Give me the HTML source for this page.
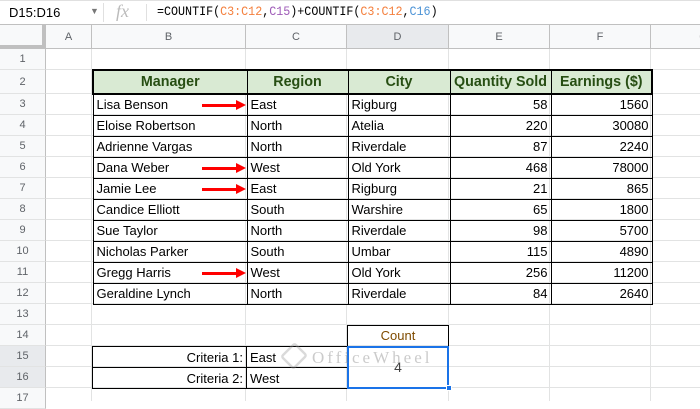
<!DOCTYPE html>
<html><head><style>
body{margin:0;width:700px;height:401px;overflow:hidden;background:#fff;font-family:"Liberation Sans",Arial,sans-serif;position:relative}
.a{position:absolute;box-sizing:border-box}
.rh{position:absolute;left:0;width:46px;background:#f8f9fa;border-right:1px solid #c0c0c0;border-bottom:1px solid #e2e3e3;color:#5f6368;font-size:11px;text-align:center;box-sizing:border-box}
.ch{position:absolute;top:25px;height:24px;background:#f8f9fa;border-right:1px solid #c0c0c0;border-bottom:1px solid #c0c0c0;color:#5f6368;font-size:11px;text-align:center;line-height:24px;box-sizing:border-box}
.vl{position:absolute;top:49px;bottom:0;width:1px;background:#e2e3e3}
.hl{position:absolute;left:46px;right:0;height:1px;background:#e2e3e3}
table{border-collapse:collapse;position:absolute;font-size:13px;table-layout:fixed}
td{border:1px solid #000;padding:0 3px;height:21px;line-height:19px;box-sizing:border-box;white-space:nowrap;overflow:hidden}
tr{height:21px}
th{border:2px solid #000;border-width:2px 1px 2px 1px;background:#d9ead3;color:#274e13;font-size:14.3px;height:22px;line-height:20px;padding:0;white-space:nowrap}
.r{text-align:right}
.arr{position:absolute;height:3px;background:#f00;width:34px}
.arr:after{content:"";position:absolute;right:-10px;top:-4px;border-left:10px solid #f00;border-top:5.5px solid transparent;border-bottom:5.5px solid transparent}
</style></head><body>
<div class="a" style="left:0;top:0;width:700px;height:25px;border-bottom:1px solid #c0c0c0;border-top:1px solid #e0e0e0"></div>
<div class="a" style="left:9px;top:5px;font-size:13px;color:#000">D15:D16</div>
<div class="a" style="left:90px;top:6px;font-size:9px;color:#777">▼</div>
<div class="a" style="left:103px;top:3px;width:1px;height:19px;background:#e0e0e0"></div>
<div class="a" style="left:116px;top:1px;font-size:18px;color:#bbb;font-style:italic;font-family:'Liberation Serif',serif">fx</div>
<div class="a" style="left:146px;top:4px;width:1px;height:17px;background:#e0e0e0"></div>
<div class="a" style="left:157px;top:4px;font-size:11.7px;color:#000;font-family:'Liberation Mono',monospace;transform:scaleY(1.12);transform-origin:top left">=COUNTIF(<span style="color:#f4803e">C3:C12</span>,<span style="color:#9f5cb8">C15</span>)+COUNTIF(<span style="color:#f4803e">C3:C12</span>,<span style="color:#4c93d6">C16</span>)</div>
<div class="ch" style="left:0;width:46px;background:#f8f9fa;border-right:4px solid #c0c0c0;border-bottom:4px solid #c0c0c0"></div>
<div class="ch" style="left:46px;width:46px">A</div>
<div class="ch" style="left:92px;width:154px">B</div>
<div class="ch" style="left:246px;width:101px">C</div>
<div class="ch" style="left:347px;width:102px;background:#e8eaed">D</div>
<div class="ch" style="left:449px;width:101px">E</div>
<div class="ch" style="left:550px;width:101px">F</div>
<div class="ch" style="left:651px;width:60px;color:#bbb">&nbsp;&nbsp;&nbsp;&nbsp;&nbsp;&nbsp;&nbsp;&nbsp;&nbsp;&nbsp;&nbsp;&nbsp;&nbsp;&nbsp;&nbsp;G</div>
<div class="vl" style="left:91px"></div><div class="vl" style="left:245px"></div><div class="vl" style="left:346px"></div><div class="vl" style="left:448px"></div><div class="vl" style="left:549px"></div><div class="vl" style="left:650px"></div>
<div class="hl" style="top:69px"></div><div class="hl" style="top:93px"></div><div class="hl" style="top:114px"></div><div class="hl" style="top:135px"></div><div class="hl" style="top:156px"></div><div class="hl" style="top:177px"></div><div class="hl" style="top:198px"></div><div class="hl" style="top:219px"></div><div class="hl" style="top:240px"></div><div class="hl" style="top:261px"></div><div class="hl" style="top:282px"></div><div class="hl" style="top:303px"></div><div class="hl" style="top:324px"></div><div class="hl" style="top:345px"></div><div class="hl" style="top:366px"></div><div class="hl" style="top:387px"></div>
<div class="rh" style="top:49px;height:21px;line-height:21px">1</div>
<div class="rh" style="top:70px;height:24px;line-height:24px">2</div>
<div class="rh" style="top:94px;height:21px;line-height:21px">3</div>
<div class="rh" style="top:115px;height:21px;line-height:21px">4</div>
<div class="rh" style="top:136px;height:21px;line-height:21px">5</div>
<div class="rh" style="top:157px;height:21px;line-height:21px">6</div>
<div class="rh" style="top:178px;height:21px;line-height:21px">7</div>
<div class="rh" style="top:199px;height:21px;line-height:21px">8</div>
<div class="rh" style="top:220px;height:21px;line-height:21px">9</div>
<div class="rh" style="top:241px;height:21px;line-height:21px">10</div>
<div class="rh" style="top:262px;height:21px;line-height:21px">11</div>
<div class="rh" style="top:283px;height:21px;line-height:21px">12</div>
<div class="rh" style="top:304px;height:21px;line-height:21px">13</div>
<div class="rh" style="top:325px;height:21px;line-height:21px">14</div>
<div class="rh" style="top:346px;height:21px;line-height:21px;background:#e8eaed">15</div>
<div class="rh" style="top:367px;height:21px;line-height:21px;background:#e8eaed">16</div>
<div class="rh" style="top:388px;height:21px;line-height:21px">17</div>
<table style="left:92px;top:69px;width:559px">
<colgroup><col style="width:154px"><col style="width:101px"><col style="width:102px"><col style="width:101px"><col style="width:101px"></colgroup>
<tr style="height:24px"><th style="border-left-width:2px">Manager</th><th>Region</th><th>City</th><th>Quantity Sold</th><th style="border-right-width:2px">Earnings ($)</th></tr>
<tr><td>Lisa Benson</td><td>East</td><td>Rigburg</td><td class="r">58</td><td class="r">1560</td></tr>
<tr><td>Eloise Robertson</td><td>North</td><td>Atelia</td><td class="r">220</td><td class="r">30080</td></tr>
<tr><td>Adrienne Vargas</td><td>North</td><td>Riverdale</td><td class="r">87</td><td class="r">2240</td></tr>
<tr><td>Dana Weber</td><td>West</td><td>Old York</td><td class="r">468</td><td class="r">78000</td></tr>
<tr><td>Jamie Lee</td><td>East</td><td>Rigburg</td><td class="r">21</td><td class="r">865</td></tr>
<tr><td>Candice Elliott</td><td>South</td><td>Warshire</td><td class="r">65</td><td class="r">1800</td></tr>
<tr><td>Sue Taylor</td><td>North</td><td>Riverdale</td><td class="r">98</td><td class="r">5700</td></tr>
<tr><td>Nicholas Parker</td><td>South</td><td>Umbar</td><td class="r">115</td><td class="r">4890</td></tr>
<tr><td>Gregg Harris</td><td>West</td><td>Old York</td><td class="r">256</td><td class="r">11200</td></tr>
<tr><td>Geraldine Lynch</td><td>North</td><td>Riverdale</td><td class="r">84</td><td class="r">2640</td></tr>
</table>
<div class="arr" style="left:202px;top:104px"></div>
<div class="arr" style="left:202px;top:167px"></div>
<div class="arr" style="left:202px;top:188px"></div>
<div class="arr" style="left:202px;top:272px"></div>
<table style="left:92px;top:346px;width:256px">
<colgroup><col style="width:154px"><col style="width:102px"></colgroup>
<tr><td class="r">Criteria 1:</td><td>East</td></tr>
<tr><td class="r">Criteria 2:</td><td>West</td></tr>
</table>
<div class="a" style="left:347px;top:325px;width:102px;height:22px;border:1px solid #000;text-align:center;font-size:13px;line-height:20px;color:#7f4b00">Count</div>
<div class="a" style="left:347px;top:346px;width:102px;height:43px;border:2px solid #1a73e8;text-align:center;font-size:14px;line-height:38px;color:#444">4</div>
<div class="a" style="left:446px;top:385px;width:6px;height:6px;background:#1a73e8;border:1px solid #fff"></div>
<div class="a" style="left:282px;top:343px;width:24px;height:26px;border:3px solid rgba(150,150,150,0.35);border-radius:4px;transform:rotate(45deg) scale(.8)"></div>
<div class="a" style="left:312px;top:348px;font-size:17px;letter-spacing:3px;color:rgba(140,140,140,0.45);font-family:'Liberation Serif',serif">OfficeWheel</div>
</body></html>
